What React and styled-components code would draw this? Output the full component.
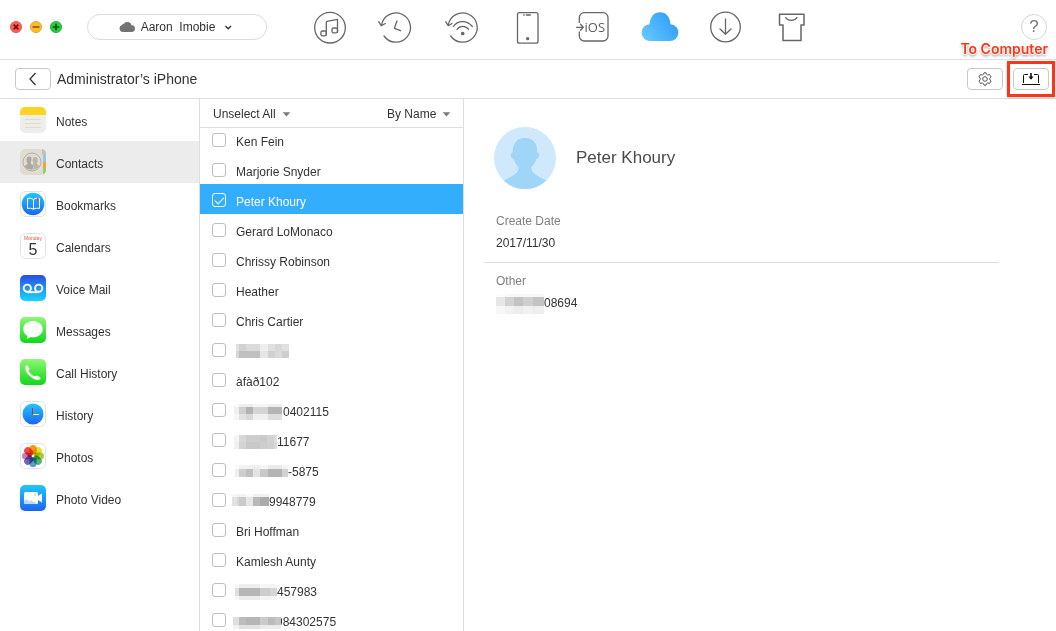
import React, { useState } from "react";
import styled, { createGlobalStyle } from "styled-components";

const GlobalStyle = createGlobalStyle`
  * {
    box-sizing: border-box;
  }

  body {
    margin: 0;
    background: #fff;
    color: #333;
    font-family: "Liberation Sans", Arial, sans-serif;
    font-size: 12px;
  }

  button, select, input {
    font: inherit;
    color: inherit;
  }

  svg {
    display: block;
    flex: none;
  }
`;

const Window = styled.div`
  display: flex;
  flex-direction: column;
  height: 100vh;
  overflow: hidden;
`;

const TopBar = styled.header`
  display: flex;
  flex: none;
  align-items: center;
  height: 60px;
  padding: 0 9px 5px 10px;
  border-bottom: 1px solid #dedede;
`;

const WindowControls = styled.div`
  display: flex;
  gap: 8px;
`;

const PlainButton = styled.button`
  display: flex;
  align-items: center;
  justify-content: center;
  padding: 0;
  border: none;
  background: none;
  cursor: pointer;
`;

const AccountButton = styled(PlainButton)`
  width: 180px;
  height: 26px;
  margin-left: 25px;
  gap: 6px;
  border: 1px solid #dcdcdc;
  border-radius: 13px;
  white-space: pre;
`;

const Tools = styled.nav`
  display: flex;
  margin: 0 auto 0 30px;
`;

const ToolButton = styled(PlainButton)`
  width: 66px;
  height: 40px;
`;

const HelpButton = styled(PlainButton)`
  width: 26px;
  height: 26px;
  border: 1px solid #d6d6d6;
  border-radius: 50%;
  color: #777;
  font-size: 17px;
`;

const DeviceBar = styled.div`
  display: flex;
  flex: none;
  align-items: center;
  height: 39px;
  padding: 0 7px 0 15px;
  border-bottom: 1px solid #dedede;
`;

const BarButton = styled(PlainButton)`
  width: 36px;
  height: 22px;
  border: 1px solid #c8c8c8;
  border-radius: 4px;
`;

const DeviceName = styled.h1`
  flex: 1;
  margin: 0 6px;
  font-size: 14px;
  font-weight: normal;
`;

const Actions = styled.div`
  display: flex;
  gap: 10px;
`;

const Highlighted = styled.div`
  position: relative;

  &::after {
    content: "";
    position: absolute;
    inset: -7px -6px;
    border: 3px solid #fb3517;
    box-shadow: 0 1px 2px rgba(0, 0, 0, 0.2);
    pointer-events: none;
  }
`;

const Callout = styled.span`
  position: absolute;
  right: 1px;
  bottom: 32px;
  color: #fb3517;
  font-family: Inter, "Liberation Sans", sans-serif;
  font-size: 14px;
  font-weight: 600;
  line-height: 18px;
  white-space: nowrap;
  text-shadow: 1px 0 #fff, -1px 0 #fff, 0 1px #fff, 0 2px 3px rgba(0, 0, 0, 0.5);
`;

const Body = styled.div`
  display: flex;
  flex: 1;
  min-height: 0;
`;

const Sidebar = styled.nav`
  flex: none;
  width: 200px;
  border-right: 1px solid #dedede;
`;

const Category = styled.a`
  display: flex;
  gap: 10px;
  height: 42px;
  padding: 8px 20px 0;
  background: ${(props) => (props.$active ? "#ececec" : "transparent")};
  color: #333;
  line-height: 30px;
  text-decoration: none;
`;

const ListColumn = styled.section`
  display: flex;
  flex: none;
  flex-direction: column;
  width: 264px;
  border-right: 1px solid #dedede;
`;

const ListHead = styled.div`
  display: flex;
  flex: none;
  align-items: center;
  justify-content: space-between;
  height: 29px;
  padding: 2px 12px 0 13px;
  border-bottom: 1px solid #dedede;
`;

const SelectBox = styled.label`
  display: flex;
  align-items: center;
  gap: 6px;
`;

const Select = styled.select`
  appearance: none;
  width: ${(props) => props.$width}px;
  height: 20px;
  padding: 0;
  border: none;
  background: none;
`;

// scrolled a little under the head
const List = styled.ul`
  flex: 1;
  min-height: 0;
  margin: -4px 0 0;
  padding: 0;
  list-style: none;
`;

const Row = styled.label`
  display: flex;
  gap: 6px;
  height: 30px;
  padding: 9px 12px 0;
  background: ${(props) => (props.$selected ? "#33aefd" : "transparent")};
  color: ${(props) => (props.$selected ? "#fff" : "#333")};
  line-height: 18px;
`;

const Checkbox = styled.input`
  appearance: none;
  flex: none;
  width: 14px;
  height: 14px;
  margin: 0;
  border: 1px solid #bfbfbf;
  border-radius: 3px;
  background: #fff;

  &:checked {
    border-color: #fff;
    background: transparent;
  }

  &:checked::after {
    content: "";
    display: block;
    width: 8px;
    height: 4px;
    margin: 3px auto;
    border: solid #fff;
    border-width: 0 0 1px 1px;
    transform: rotate(-45deg);
  }
`;

const ContactName = styled.span`
  display: flex;
  padding-left: ${(props) => (props.$masked ? 0 : 4)}px;
`;

const Patch = styled.svg`
  position: relative;
  margin-right: ${(props) => -props.$overlap}px;
`;

const Detail = styled.main`
  flex: 1;
  min-width: 0;
  padding: 28px 57px 0 20px;
`;

const Person = styled.div`
  display: flex;
  align-items: center;
  gap: 20px;
  padding: 0 10px 14px;
`;

const PersonName = styled.h2`
  margin: 0;
  color: #4a4a4a;
  font-size: 17px;
  font-weight: normal;
`;

const Fields = styled.dl`
  margin: 0;
`;

const Field = styled.div`
  padding: 7px 12px 8px;
  line-height: 22px;

  & + & {
    border-top: 1px solid #dedede;
  }
`;

const FieldLabel = styled.dt`
  color: #808080;
`;

const FieldValue = styled.dd`
  display: flex;
  margin: 0;
`;

const stroke = {
  fill: "none",
  stroke: "#666",
  strokeWidth: 1.3,
  strokeLinecap: "round",
  strokeLinejoin: "round",
};

const Dot = ({ fill, edge, mark, d }) => (
  <svg width="12" height="12" viewBox="0 0 12 12">
    <circle cx="6" cy="6" r="5.6" fill={fill} stroke={edge} strokeWidth="0.8" />
    <path d={d} stroke={mark} strokeWidth="1.7" />
  </svg>
);

const CloudMark = () => (
  <svg width="16" height="10" viewBox="0 0 16 10" fill="#737373">
    <path d="M4 10a3.6 3.6 0 0 1-1-7A2.3 2.3 0 0 1 5 1.8 4.2 4.2 0 0 1 12.6 3.2 3.4 3.4 0 0 1 12.6 10Z" />
  </svg>
);

const Chevron = () => (
  <svg width="14" height="8" viewBox="0 0 14 8">
    <path d="M4.5 3 7.2 5.7 10 3" fill="none" stroke="#333" strokeWidth="1.4" />
  </svg>
);

const Triangle = () => (
  <svg width="9" height="5" viewBox="0 0 9 5">
    <path d="M.7.3h7.6L4.5 4.5Z" fill="#7a7a7a" />
  </svg>
);

const Tool = ({ children }) => (
  <svg width="40" height="40" viewBox="0 0 40 40" {...stroke}>
    {children}
  </svg>
);

const MusicIcon = () => (
  <Tool>
    <circle cx="20" cy="20.7" r="15.3" />
    <path d="M16.3 28V15.3Q16.3 14.6 17 14.4L27.5 12.3V25" />
    <rect x="10.9" y="24" width="5.4" height="4.8" rx="1.6" />
    <rect x="22" y="21" width="5.5" height="4.8" rx="1.6" />
  </Tool>
);

const HistoryTool = () => (
  <Tool>
    <path d="M5.500 18A14.600 14.600 0 1 1 8 29M2.800 14.800 5.300 18.700 9.300 16.500M21 14 18.400 21.300 24.500 23.700" />
  </Tool>
);

const WifiTool = () => (
  <Tool>
    <path d="M6.2 18A14.6 14.6 0 1 1 8.7 29M3.8 14.8 6.2 18.7 10 16.5M11.3 19.5C15.5 13.2 25 12.700 30.300 19.500M15 22.300C18 18.500 23.500 18.500 26.500 22.300" />
    <circle cx="20.7" cy="26.5" r="1.2" fill="#666" />
  </Tool>
);

const PhoneTool = () => (
  <Tool>
    <rect x="9.500" y="5.700" width="20.500" height="30.500" rx="2" />
    <path d="M15.700 8h.5M18.300 8h4" />
    <circle cx="19.700" cy="31.700" r="1" fill="#666" />
  </Tool>
);

const IosTool = () => (
  <Tool>
    <path d="M5.3 15.5V10.700a5 5 0 0 1 5-5H29a5 5 0 0 1 5 5V29a5 5 0 0 1-5 5H10.300a5 5 0 0 1-5-5V25M2.500 20.300H9M6.500 17.300 9.300 20.300 6.500 23.300" />
    <text x="10.500" y="25" fontFamily="Open Sans" fontSize="13" fill="#5c5c5c" stroke="none">
      iOS
    </text>
  </Tool>
);

const CloudTool = () => (
  <Tool>
    <defs>
      <linearGradient id="cloud" x1="0" y1="0.9" x2="1" y2="0.3">
        <stop offset="0" stopColor="#68caff" />
        <stop offset="1" stopColor="#2f9cf7" />
      </linearGradient>
    </defs>
    <path
      d="M10.500 34A8.400 8.400 0 0 1 9.500 17.200C10 10 14 5.300 20 5.300S30 10 30.500 17.200A8.400 8.400 0 0 1 29.500 34Z"
      fill="url(#cloud)"
      stroke="none"
    />
  </Tool>
);

const DownloadTool = () => (
  <Tool>
    <circle cx="19.5" cy="20" r="14.8" />
    <path d="M19.5 12V27M14 22 19.500 27.300 25 22" />
  </Tool>
);

const ShirtTool = () => (
  <Tool>
    <path d="M7.500 7.200H32V18H29V33.500H11V18H7.500Z" strokeWidth="1.500" />
    <path d="M13.700 10.500C15.500 14.200 23 14.200 25 10.500" />
  </Tool>
);

const BackIcon = () => (
  <svg width="10" height="14" viewBox="0 0 10 14">
    <path d="M7.5 1 2 7 7.5 13" fill="none" stroke="#333" strokeWidth="1.3" />
  </svg>
);

const GearIcon = () => (
  <svg width="14" height="14" viewBox="0 0 14 14" fill="none" stroke="#555" strokeLinejoin="round">
    <path d="M5.5 2.3 6 .8H8L8.5 2.3 9.6 3 11.6 2.6 13 4.8 11.800 6.300V7.700L13 9.200 11.600 11.400 9.600 11 8.500 11.700 8 13.200H6L5.500 11.700 4.400 11 2.400 11.400 1 9.200 2.200 7.700V6.300L1 4.800 2.400 2.600 4.400 3Z" />
    <circle cx="7" cy="7" r="2.300" />
  </svg>
);

const ToComputerIcon = () => (
  <svg width="18" height="14" viewBox="0 0 18 14" fill="none" stroke="#111">
    <path d="M6 2.500H2.500Q1.500 2.500 1.500 3.500V11M12 2.500H15.500Q16.500 2.500 16.500 3.500V11M0 12.500H18" />
    <path d="M9 1V7" strokeWidth="1.600" />
    <path d="M6.500 4.500H11.500L9 7.700Z" fill="#111" stroke="none" />
  </svg>
);

const AppIcon = ({ fill, framed, id, from, to, children }) => (
  <svg width="26" height="26" viewBox="0 0 26 26">
    {from && (
      <linearGradient id={id} x1="0" y1="0" x2="0" y2="1">
        <stop offset="0" stopColor={from} />
        <stop offset="1" stopColor={to} />
      </linearGradient>
    )}
    {framed ? (
      <rect x="0.5" y="0.5" width="25" height="25" rx="5" fill="#fff" stroke="#e2e2e2" />
    ) : (
      <rect width="26" height="26" rx="5" fill={fill || `url(#${id})`} />
    )}
    {children}
  </svg>
);

const NotesIcon = () => (
  <AppIcon fill="#ededed">
    <path d="M0 8V5a5 5 0 0 1 5-5H21a5 5 0 0 1 5 5V8Z" fill="#ffd321" />
    <path d="M5 12.5H21M5 16.5H21M5 20.5H21" stroke="#e2dcb9" />
  </AppIcon>
);

const ContactsIcon = () => (
  <AppIcon fill="#e0dcd2">
    <path d="M22 0a5 5 0 0 1 4 5V6H22Z" fill="#c2c0ba" />
    <path d="M23 6h3v7h-3Z" fill="#8cc8f5" />
    <path d="M23 13h3v6h-3Z" fill="#f3a52c" />
    <path d="M23 19h3v2a5 5 0 0 1-3 4.600Z" fill="#8bd56f" />
    <circle cx="12" cy="13" r="9" fill="none" stroke="#b3b0a8" />
    <path
      d="M9 7.500c2 0 2.700 1.400 2.500 3.500-.1 1.300-.7 2-.9 2.900 0 1.200 2 1.400 2.900 2.600l-1 4.200C9 20.700 6 19.500 4.700 16.900c1.200-1 2.800-1 2.900-2.400C6.200 12.500 5.800 7.500 9 7.500Z"
      fill="#aba89f"
    />
    <path
      d="M15 8c2.600 0 3 2.500 2.600 4.200-.2 1-.7 1.500-.8 2.300.3 1.100 1.600 1.300 2.700 2.300A8 8 0 0 1 13 20.700c1-2 .8-4-.3-5 1-.5.600-1.500.300-2.500C12.300 11 12.600 8 15 8Z"
      fill="#b8b5ac"
    />
  </AppIcon>
);

const BookmarksIcon = () => (
  <AppIcon framed id="bookmarks" from="#21c8fc" to="#1c65f0">
    <circle cx="13" cy="13" r="11.3" fill="url(#bookmarks)" />
    <path
      d="M13.500 8.500C11.500 7 9.500 7 7.500 7.500V17.500C9.500 17 11.500 17 13.500 18.300C15.500 17 17.500 17 19.500 17.500V7.500C17.500 7 15.500 7 13.500 8.500ZV18"
      fill="none"
      stroke="#fff"
    />
    <path d="M17 6.800h1.500v3.700l-.7-.7-.8.700Z" fill="#e9414a" />
  </AppIcon>
);

const CalendarIcon = () => (
  <AppIcon framed>
    <text x="13" y="7" fontSize="5" textAnchor="middle" fill="#f0524f">
      Monday
    </text>
    <text x="13" y="22" fontSize="16" textAnchor="middle" fill="#333">
      5
    </text>
  </AppIcon>
);

const VoiceMailIcon = () => (
  <AppIcon id="voice" from="#2b4be6" to="#18d6fd">
    <g fill="none" stroke="#fff" strokeWidth="1.9">
      <circle cx="7.3" cy="13.2" r="3.6" />
      <circle cx="18.7" cy="13.2" r="3.6" />
      <path d="M7 17.2H19" />
    </g>
  </AppIcon>
);

const MessagesIcon = () => (
  <AppIcon id="messages" from="#8bf972" to="#12d619">
    <path
      d="M13 4C18.300 4 22.700 7.600 22.700 12.200S18.300 20.300 13 20.300C12 20.300 11 20.200 10.200 19.900 9.200 21 7.800 21.500 6.300 21.600 7.200 20.800 7.500 20 7.500 18.900 4.900 17.400 3.300 15 3.300 12.200 3.300 7.600 7.700 4 13 4Z"
      fill="#fff"
    />
  </AppIcon>
);

const CallIcon = () => (
  <AppIcon id="call" from="#8bf972" to="#12d619">
    <path
      d="M5.200 8.200C5.200 6.900 6.500 5.900 7.600 6.200 8.300 7.200 9.300 9 9.500 10 9.300 10.800 8.600 11.200 8.700 12 9.600 14.200 12 16.400 14.200 17.200 15.200 17.400 15.700 16.600 16.700 16.500 18 16.900 19.800 18 20.700 19 20.700 20.200 19 21 17.500 20.900 11.500 20.300 5 13.500 5.200 8.200Z"
      fill="#fff"
    />
  </AppIcon>
);

const HistoryIcon = () => (
  <AppIcon framed id="history" from="#21c8fc" to="#1c65f0">
    <circle cx="13" cy="13" r="10.5" fill="url(#history)" />
    <path d="M12.5 7V14" stroke="#e0202c" />
    <path d="M13 13.5H19" stroke="#fff" />
  </AppIcon>
);

const petals = ["#f79a1c", "#e8df1b", "#a9cc3a", "#52b483", "#5a9bd6", "#7366b0", "#c77db5", "#ef4a45"];

const PhotosIcon = () => (
  <AppIcon framed>
    {petals.map((color, i) => (
      <rect
        key={color}
        x="9.4"
        y="2"
        width="7.2"
        height="9.8"
        rx="3.6"
        fill={color}
        style={{ mixBlendMode: "multiply" }}
        transform={`rotate(${i * 45} 13 13)`}
      />
    ))}
  </AppIcon>
);

const VideoIcon = () => (
  <AppIcon id="video" from="#21c8fc" to="#1c65f0">
    <rect x="4" y="7" width="14" height="12" rx="1.5" fill="#fff" />
    <path d="M17 11.5 22 8.5V17.5L17 14.5Z" fill="#fff" />
    <path d="M4 16c2-2.500 4-1.500 5 .5 1.500-1.500 3.500-1 4 .5 1.500-.500 2.500.500 3 2H5.500A1.500 1.500 0 0 1 4 17.500Z" fill="#b9dcf5" />
    <circle cx="15" cy="10" r="1" fill="#b9dcf5" />
  </AppIcon>
);

const Avatar = () => (
  <svg width="62" height="62" viewBox="0 0 62 62">
    <circle cx="31" cy="31" r="31" fill="#cfe8fb" />
    <path
      d="M31 11C39 11 43.500 16.500 43.200 25.500 46.500 25.500 45.500 31.500 42.300 32 41.200 35.500 39.500 38 37.500 40 37 46 41 47.500 52.300 53.600A31 31 0 0 1 9.700 53.600C21 47.500 25 46 24.500 40 22.500 38 20.800 35.500 19.700 32 16.500 31.500 15.500 25.500 18.800 25.500 18.500 16.500 23 11 31 11Z"
      fill="#9fd5f7"
    />
  </svg>
);

// Pixelated patch over a private number. Each band is [y, height, [[width, shade], ...]].
const Mosaic = ({ start = 0, width, overlap = 0, bands }) => (
  <Patch width={width} height="22" shapeRendering="crispEdges" $overlap={overlap}>
    {bands.map(([y, height, cells]) => {
      let x = start;
      return cells.map(([w, shade]) => {
        x += w;
        return <rect key={`${x}-${y}`} x={x - w} y={y} width={w} height={height} fill={shade} />;
      });
    })}
  </Patch>
);

const contacts = [
  { name: "Ken Fein" },
  { name: "Marjorie Snyder" },
  { name: "Peter Khoury" },
  { name: "Gerard LoMonaco" },
  { name: "Chrissy Robinson" },
  { name: "Heather" },
  { name: "Chris Cartier" },
  {
    name: "",
    mask: {
      start: 4,
      width: 57,
      bands: [
        [1, 7, [[3, "#e0e0e0"], [7, "#d2d2d2"], [14, "#dadada"], [8, "#eee"], [7, "#e0e0e0"], [7, "#d8d8d8"], [7, "#e0e0e0"]]],
        [8, 7, [[3, "#d6d6d6"], [21, "#c0c0c0"], [8, "#e6e6e6"], [7, "#d0d0d0"], [7, "#dadada"], [7, "#cdcdcd"]]],
      ],
    },
  },
  { name: "àfàð102" },
  {
    name: "0402115",
    mask: {
      start: 2,
      width: 51,
      overlap: 0,
      bands: [
        [1, 3, [[5, "#fafafa"], [14, "#eee"], [15, "#f7f7f7"], [14, "#eee"]]],
        [4, 7, [[5, "#efefef"], [7, "#cfcfcf"], [7, "#b2b2b2"], [15, "#d4d4d4"], [14, "#b4b4b4"]]],
        [11, 6, [[5, "#f7f7f7"], [7, "#e2e2e2"], [7, "#d8d8d8"], [15, "#f0f0f0"], [14, "#dedede"]]],
      ],
    },
  },
  {
    name: "11677",
    mask: {
      start: 2,
      width: 45,
      bands: [
        [2, 7, [[5, "#f4f4f4"], [7, "#d8d8d8"], [14, "#cdcdcd"], [7, "#cacaca"], [7, "#d2d2d2"], [3, "#dedede"]]],
        [9, 7, [[5, "#f1f1f1"], [7, "#d4d4d4"], [14, "#c8c8c8"], [7, "#cdcdcd"], [7, "#d0d0d0"], [3, "#dadada"]]],
      ],
    },
  },
  {
    name: "-5875",
    mask: {
      start: 3,
      width: 56,
      bands: [
        [2, 4, [[4, "#fafafa"], [14, "#f2f2f2"], [7, "#eee"], [8, "#f5f5f5"], [14, "#eaeaea"], [6, "#f5f5f5"]]],
        [6, 8, [[4, "#efefef"], [7, "#cecece"], [7, "#c0c0c0"], [7, "#e4e4e4"], [8, "#c8c8c8"], [14, "#b4b4b4"], [6, "#d2d2d2"]]],
      ],
    },
  },
  {
    name: "9948779",
    mask: {
      start: 0,
      width: 37,
      bands: [
        [1, 3, [[5, "#f7f7f7"], [9, "#f2f2f2"], [7, "#fafafa"], [16, "#f0f0f0"]]],
        [4, 9, [[5, "#e2e2e2"], [2, "#d8d8d8"], [7, "#cacaca"], [7, "#e6e6e6"], [7, "#b9b9b9"], [9, "#ababab"]]],
      ],
    },
  },
  { name: "Bri Hoffman" },
  { name: "Kamlesh Aunty" },
  {
    name: "457983",
    mask: {
      start: 3,
      width: 45,
      bands: [
        [1, 4, [[4, "#f7f7f7"], [21, "#efefef"], [17, "#f5f5f5"]]],
        [5, 8, [[4, "#dedede"], [21, "#b6b6b6"], [10, "#cdcdcd"], [7, "#d6d6d6"]]],
        [13, 4, [[4, "#f7f7f7"], [21, "#ececec"], [17, "#f4f4f4"]]],
      ],
    },
  },
  {
    name: "984302575",
    mask: {
      start: 1,
      width: 49,
      overlap: 5,
      bands: [
        [4, 8, [[6, "#dedede"], [7, "#bdbdbd"], [14, "#b6b6b6"], [8, "#cbcbcb"], [7, "#bcbcbc"], [6, "#c6c6c6"]]],
        [12, 4, [[6, "#f2f2f2"], [21, "#e2e2e2"], [21, "#ececec"]]],
      ],
    },
  },
];

const otherMask = {
  width: 48,
  bands: [
    [2, 3, [[9, "#fcfcfc"], [39, "#f7f7f7"]]],
    [5, 9, [[9, "#e6e6e6"], [9, "#d2d2d2"], [9, "#c3c3c3"], [10, "#cfcfcf"], [11, "#c3c3c3"]]],
    [14, 8, [[9, "#f7f7f7"], [9, "#f1f1f1"], [9, "#ececec"], [10, "#f1f1f1"], [11, "#eee"]]],
  ],
};

const categories = [
  ["Notes", NotesIcon],
  ["Contacts", ContactsIcon],
  ["Bookmarks", BookmarksIcon],
  ["Calendars", CalendarIcon],
  ["Voice Mail", VoiceMailIcon],
  ["Messages", MessagesIcon],
  ["Call History", CallIcon],
  ["History", HistoryIcon],
  ["Photos", PhotosIcon],
  ["Photo Video", VideoIcon],
];

const tools = [
  ["Music", MusicIcon],
  ["Backup history", HistoryTool],
  ["Air backup", WifiTool],
  ["Device", PhoneTool],
  ["Move to iOS", IosTool],
  ["iCloud", CloudTool],
  ["Download", DownloadTool],
  ["Skin", ShirtTool],
];

const App = () => {
  const [category, setCategory] = useState("Contacts");
  const [checked, setChecked] = useState([2]);

  const toggle = (index) => {
    setChecked(
      checked.includes(index) ? checked.filter((i) => i !== index) : [...checked, index]
    );
  };

  return (
    <Window>
      <GlobalStyle />
      <TopBar>
        <WindowControls>
          <PlainButton aria-label="Close">
            <Dot fill="#fb5f58" edge="#e04b45" mark="#7a0a06" d="M3.7 3.7 8.3 8.3M8.3 3.7 3.7 8.3" />
          </PlainButton>
          <PlainButton aria-label="Minimize">
            <Dot fill="#fdbb2d" edge="#dfa023" mark="#985a05" d="M2.5 6H9.5" />
          </PlainButton>
          <PlainButton aria-label="Zoom">
            <Dot fill="#2bca42" edge="#1dad2b" mark="#08590d" d="M2.7 6H9.3M6 2.7V9.3" />
          </PlainButton>
        </WindowControls>
        <AccountButton>
          <CloudMark />
          {"Aaron  Imobie"}
          <Chevron />
        </AccountButton>
        <Tools>
          {tools.map(([label, Icon]) => (
            <ToolButton key={label} aria-label={label}>
              <Icon />
            </ToolButton>
          ))}
        </Tools>
        <HelpButton>?</HelpButton>
      </TopBar>

      <DeviceBar>
        <BarButton aria-label="Back">
          <BackIcon />
        </BarButton>
        <DeviceName>Administrator’s iPhone</DeviceName>
        <Actions>
          <BarButton aria-label="Settings">
            <GearIcon />
          </BarButton>
          <Highlighted>
            <Callout>To Computer</Callout>
            <BarButton aria-label="Send to computer">
              <ToComputerIcon />
            </BarButton>
          </Highlighted>
        </Actions>
      </DeviceBar>

      <Body>
        <Sidebar>
          {categories.map(([label, Icon]) => (
            <Category
              key={label}
              href="#"
              $active={label === category}
              onClick={() => setCategory(label)}
            >
              <Icon />
              {label}
            </Category>
          ))}
        </Sidebar>

        <ListColumn>
          <ListHead>
            <SelectBox>
              <Select $width={63} aria-label="Selection">
                <option>Unselect All</option>
                <option>Select All</option>
              </Select>
              <Triangle />
            </SelectBox>
            <SelectBox>
              <Select $width={49} aria-label="Sort">
                <option>By Name</option>
                <option>By Date</option>
              </Select>
              <Triangle />
            </SelectBox>
          </ListHead>
          <List>
            {contacts.map(({ name, mask }, index) => (
              <li key={index}>
                <Row $selected={checked.includes(index)}>
                  <Checkbox
                    type="checkbox"
                    checked={checked.includes(index)}
                    onChange={() => toggle(index)}
                  />
                  <ContactName $masked={Boolean(mask)}>
                    {mask && <Mosaic {...mask} />}
                    {name}
                  </ContactName>
                </Row>
              </li>
            ))}
          </List>
        </ListColumn>

        <Detail>
          <Person>
            <Avatar />
            <PersonName>Peter Khoury</PersonName>
          </Person>
          <Fields>
            <Field>
              <FieldLabel>Create Date</FieldLabel>
              <FieldValue>2017/11/30</FieldValue>
            </Field>
            <Field>
              <FieldLabel>Other</FieldLabel>
              <FieldValue>
                <Mosaic {...otherMask} />
                08694
              </FieldValue>
            </Field>
          </Fields>
        </Detail>
      </Body>
    </Window>
  );
};

export default App;
